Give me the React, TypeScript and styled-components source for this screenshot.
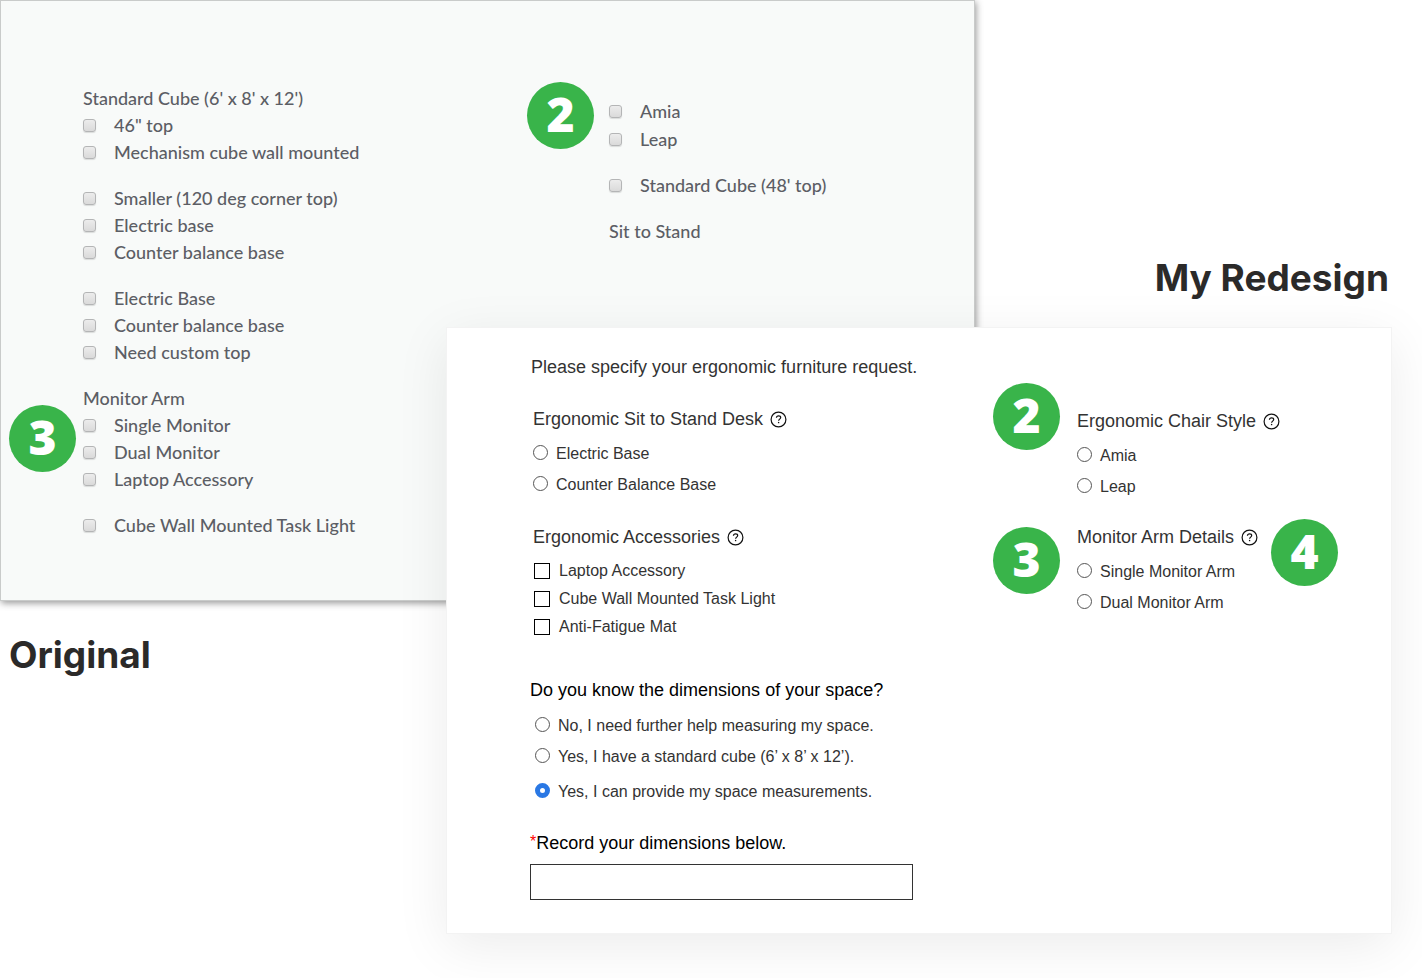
import React, { useId, useState } from "react";
import styled, { createGlobalStyle } from "styled-components";

const sans = `"Liberation Sans", Arial, sans-serif`;
const display = `Inter, "Open Sans", sans-serif`;

const GlobalStyle = createGlobalStyle`
  *, *::before, *::after { box-sizing: border-box; }
  body { margin: 0; background: #fff; font-family: ${sans}; color: #333; }
`;

const Stage = styled.main`
  display: grid;
  grid-template-columns: 446fr 529fr 417fr 30fr;
  grid-template-rows: 327px 274px auto;
  padding-bottom: 44px;
  overflow: hidden;
`;

const Caption = styled.h2`
  margin: 0;
  font: 700 37px/44px ${display};
  color: #2b2a29;
  white-space: nowrap;
`;

const OriginalCaption = styled(Caption)`
  grid-area: 3 / 1 / 4 / 2;
  padding: 32px 0 0 9px;
`;

const RedesignCaption = styled(Caption)`
  grid-area: 1 / 3 / 2 / 4;
  place-self: end;
  padding: 0 3px 27px 0;
`;

const OriginalPanel = styled.section`
  grid-area: 1 / 1 / 3 / 3;
  display: grid;
  grid-template-columns: 526fr 283fr;
  align-items: start;
  padding: 84px 82px 0;
  border: 1px solid #c9cbca;
  background: #f8faf9;
  box-shadow: 1px 2px 7px rgba(0, 0, 0, 0.42);
  font-family: Lato, sans-serif;
  color: #5c5e65;
`;

const OldColumn = styled.div<{ $line: number; $gap: number; $top?: number }>`
  display: flex;
  flex-direction: column;
  gap: ${(p) => p.$gap}px;
  padding-top: ${(p) => p.$top ?? 0}px;
  font-size: 18px;
  font-weight: 500;
  line-height: ${(p) => p.$line}px;
`;

const Group = styled.fieldset`
  position: relative;
  min-width: 0;
  margin: 0;
  padding: 0;
  border: 0;
`;

const OldLegend = styled.legend`
  padding: 0;
`;

const OldOption = styled.label`
  display: flex;
  align-items: center;
  gap: 18px;
  white-space: nowrap;
`;

const OldCheckbox = styled.input`
  appearance: none;
  flex: none;
  width: 13px;
  height: 13px;
  margin: 0;
  border: 1px solid #b4b5b6;
  border-radius: 3px;
  background: linear-gradient(#ececec, #dadada);
  box-shadow: 0 1px 1px rgba(0, 0, 0, 0.12);
  &:checked { background: #8a8c90; }
`;

const Badge = styled.span<{ $x: number; $y: number }>`
  position: absolute;
  left: ${(p) => p.$x}px;
  top: ${(p) => p.$y}px;
  width: 67px;
  height: 67px;
  border-radius: 50%;
  background: #39b44a;
  color: #fff;
  font: 800 48px/64px "Open Sans", sans-serif;
  text-align: center;
`;

const RedesignPanel = styled.form`
  grid-area: 2 / 2 / 4 / 4;
  padding: 29px 54px 33px 83px;
  border: 1px solid #f3f3f3;
  background: #fff;
  box-shadow: 0 12px 50px rgba(0, 0, 0, 0.08);
`;

const Intro = styled.p`
  margin: 0 0 32px;
  padding-left: 1px;
  font-size: 18px;
  line-height: 20px;
`;

const Fields = styled.div`
  display: grid;
  grid-template-columns: 544fr 260fr;
  row-gap: 25px;
  align-items: start;
  padding-left: 3px;
`;

const ChairGroup = styled(Group)`
  margin-top: 2px;
`;

const Legend = styled.legend<{ $strong?: boolean }>`
  display: flex;
  align-items: center;
  gap: 7px;
  padding: 0;
  font-size: 18px;
  line-height: 20px;
  white-space: nowrap;
  color: ${(p) => (p.$strong ? "#000" : "#333")};
`;

const Options = styled.div<{ $top?: number; $inset?: number }>`
  padding: ${(p) => p.$top ?? 9}px 0 0 ${(p) => p.$inset ?? 0}px;
`;

const Option = styled.label<{ $height?: number }>`
  display: flex;
  align-items: center;
  gap: 8px;
  height: ${(p) => p.$height ?? 31}px;
  font-size: 16px;
  white-space: nowrap;
`;

const LastOption = styled(Option)`
  margin-top: 4px;
`;

const Radio = styled.input`
  appearance: none;
  flex: none;
  width: 15px;
  height: 15px;
  margin: 0 0 2px;
  border: 1px solid #555;
  border-radius: 50%;
  background: #fff;
  &:checked { border: 5px solid #2a78e4; }
`;

const Checkbox = styled.input`
  appearance: none;
  flex: none;
  width: 16px;
  height: 16px;
  margin: 0 1px;
  border: 1px solid #000;
  background: #fff;
  &:checked { background: #2a78e4; }
`;

const HelpButton = styled.button`
  display: flex;
  padding: 0;
  border: 0;
  background: none;
  color: #111;
  cursor: pointer;
`;

const SpaceGroup = styled(Group)`
  margin-top: 39px;
`;

const RecordLabel = styled.label`
  display: flex;
  margin: 26px 0 11px;
  font-size: 18px;
  line-height: 20px;
  color: #000;
`;

const Required = styled.span`
  font-size: 16px;
  line-height: 18px;
  color: #f00;
`;

const DimensionsInput = styled.input`
  display: block;
  width: 383px;
  max-width: 100%;
  height: 36px;
  padding: 0 10px;
  border: 1px solid #333;
  border-radius: 0;
  background: #fff;
  font: 16px ${sans};
`;

function Help({ topic }: { topic: string }) {
  return (
    <HelpButton type="button" aria-label={`Help: ${topic}`}>
      <svg width="17" height="17" viewBox="0 0 17 17" fill="none" stroke="currentColor">
        <circle cx="8.5" cy="8.5" r="7.4" strokeWidth="1.2" />
        <path d="M6.4 6.8c.1-1.3 1-2 2.2-2s2.1.7 2.1 1.8c0 1.5-2.1 1.6-2.1 3.2" strokeWidth="1.2" />
        <path d="M8.6 10.9v1.3" strokeWidth="1.3" />
      </svg>
    </HelpButton>
  );
}

function OldChecks({ items }: { items: string[] }) {
  return (
    <>
      {items.map((item) => (
        <OldOption key={item}>
          <OldCheckbox type="checkbox" />
          {item}
        </OldOption>
      ))}
    </>
  );
}

function Radios({ name, items }: { name: string; items: string[] }) {
  return (
    <Options>
      {items.map((item) => (
        <Option key={item}>
          <Radio type="radio" name={name} />
          {item}
        </Option>
      ))}
    </Options>
  );
}

export default function App() {
  const dimensionsId = useId();
  const [space, setSpace] = useState("measured");

  return (
    <>
      <GlobalStyle />
      <Stage>
        <OriginalPanel>
          <OldColumn $line={27} $gap={19}>
            <Group>
              <OldLegend>Standard Cube (6' x 8' x 12')</OldLegend>
              <OldChecks items={['46" top', "Mechanism cube wall mounted"]} />
            </Group>
            <Group>
              <OldChecks items={["Smaller (120 deg corner top)", "Electric base", "Counter balance base"]} />
            </Group>
            <Group>
              <OldChecks items={["Electric Base", "Counter balance base", "Need custom top"]} />
            </Group>
            <Group>
              <OldLegend>Monitor Arm</OldLegend>
              <OldChecks items={["Single Monitor", "Dual Monitor", "Laptop Accessory"]} />
              <Badge $x={-74} $y={-7}>3</Badge>
            </Group>
            <Group>
              <OldChecks items={["Cube Wall Mounted Task Light"]} />
            </Group>
          </OldColumn>
          <OldColumn $line={28} $gap={18} $top={12}>
            <Group>
              <OldChecks items={["Amia", "Leap"]} />
              <Badge $x={-82} $y={-15}>2</Badge>
            </Group>
            <Group>
              <OldChecks items={["Standard Cube (48' top)"]} />
            </Group>
            <Group>
              <OldLegend>Sit to Stand</OldLegend>
            </Group>
          </OldColumn>
        </OriginalPanel>

        <RedesignCaption>My Redesign</RedesignCaption>
        <OriginalCaption>Original</OriginalCaption>

        <RedesignPanel>
          <Intro>Please specify your ergonomic furniture request.</Intro>
          <Fields>
            <Group>
              <Legend>
                Ergonomic Sit to Stand Desk <Help topic="Ergonomic Sit to Stand Desk" />
              </Legend>
              <Radios name="desk" items={["Electric Base", "Counter Balance Base"]} />
            </Group>
            <ChairGroup>
              <Legend>
                Ergonomic Chair Style <Help topic="Ergonomic Chair Style" />
              </Legend>
              <Radios name="chair" items={["Amia", "Leap"]} />
              <Badge $x={-84} $y={-48}>2</Badge>
            </ChairGroup>
            <Group>
              <Legend>
                Ergonomic Accessories <Help topic="Ergonomic Accessories" />
              </Legend>
              <Options $top={10}>
                {["Laptop Accessory", "Cube Wall Mounted Task Light", "Anti-Fatigue Mat"].map((item) => (
                  <Option key={item} $height={28}>
                    <Checkbox type="checkbox" />
                    {item}
                  </Option>
                ))}
              </Options>
            </Group>
            <Group>
              <Legend>
                Monitor Arm Details <Help topic="Monitor Arm Details" />
              </Legend>
              <Radios name="arm" items={["Single Monitor Arm", "Dual Monitor Arm"]} />
              <Badge $x={-84} $y={-20}>3</Badge>
              <Badge $x={194} $y={-28}>4</Badge>
            </Group>
          </Fields>

          <SpaceGroup>
            <Legend $strong>Do you know the dimensions of your space?</Legend>
            <Options $top={10} $inset={5}>
              <Option>
                <Radio type="radio" name="space" checked={space === "help"} onChange={() => setSpace("help")} />
                No, I need further help measuring my space.
              </Option>
              <Option>
                <Radio type="radio" name="space" checked={space === "cube"} onChange={() => setSpace("cube")} />
                Yes, I have a standard cube (6’ x 8’ x 12’).
              </Option>
              <LastOption>
                <Radio type="radio" name="space" checked={space === "measured"} onChange={() => setSpace("measured")} />
                Yes, I can provide my space measurements.
              </LastOption>
            </Options>
          </SpaceGroup>

          <RecordLabel htmlFor={dimensionsId}>
            <Required>*</Required>Record your dimensions below.
          </RecordLabel>
          <DimensionsInput id={dimensionsId} type="text" required />
        </RedesignPanel>
      </Stage>
    </>
  );
}
